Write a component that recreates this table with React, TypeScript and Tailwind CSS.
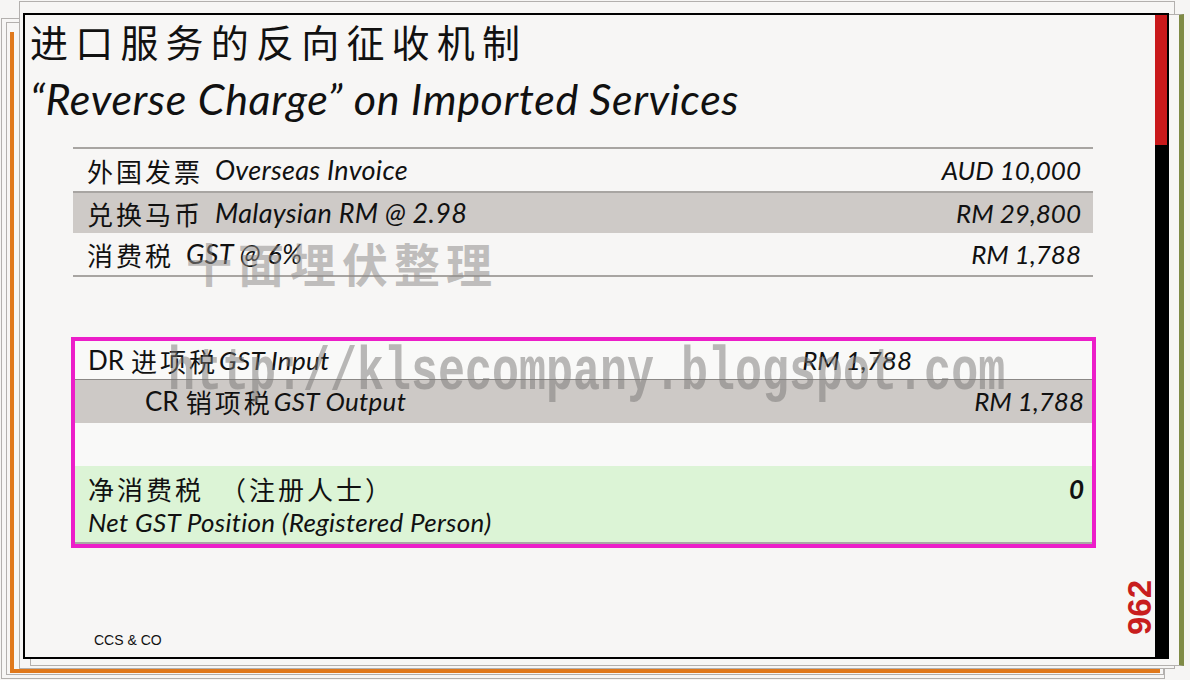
import React from 'react';

const zh = '"Noto Sans CJK SC", sans-serif';
const latin = 'Lato, "Noto Sans CJK SC", sans-serif';

function Zh({ children, className = '' }: { children: React.ReactNode; className?: string }) {
  return (
    <span className={`tracking-[3px] ${className}`} style={{ fontFamily: zh }}>
      {children}
    </span>
  );
}

const rows = [
  { zh: '外国发票', en: 'Overseas Invoice', value: 'AUD 10,000', shaded: false },
  { zh: '兑换马币', en: 'Malaysian RM @ 2.98', value: 'RM 29,800', shaded: true },
  { zh: '消费税', en: 'GST @ 6%', value: 'RM 1,788', shaded: false },
];

export default function App() {
  return (
    <div className="relative w-[1190px] h-[680px] overflow-hidden bg-[#f6f5f4]" style={{ fontFamily: latin }}>
      {/* stacked sheets behind the slide */}
      <div className="absolute left-[1px] top-[18px] w-[1164px] h-[661px] border border-[#b3b0ae] bg-[#f7f6f5]" />
      <div className="absolute left-[6px] top-[22px] w-[1158px] h-[653px] border border-[#b3b0ae] bg-[#f7f6f5]" />
      <div className="absolute left-[10px] top-[32px] w-[1150px] h-[641px] border-l-4 border-b-4 border-[#e0791d]" />
      <div className="absolute left-[19px] top-[1px] w-[1156px] h-[668px] border border-[#b3b0ae] bg-[#f7f6f5]" />
      <div className="absolute left-[30px] top-[14px] w-[1154px] h-[652px] border border-[#b3b0ae] border-r-[5px] border-r-[#7f8b46] bg-[#f7f6f5]" />

      {/* slide */}
      <div className="absolute left-[23px] top-[13px] w-[1146px] h-[646px] border-2 border-black bg-[#f7f6f5] flex">
        <div className="flex-1 flex flex-col text-[#111]">
          <div className="mt-[2px] pl-[5px] h-[48px] text-[38px] leading-[48px] tracking-[7.2px]" style={{ fontFamily: zh }}>
            进口服务的反向征收机制
          </div>
          <div className="pl-[5px] h-[68px] text-[43px] leading-[68px] tracking-[0.65px] italic">
            “Reverse Charge” on Imported Services
          </div>

          <div className="mt-[14px] ml-[48px] w-[1020px] border-t-2 border-b-2 border-[#a8a5a2]">
            {rows.map((r, i) => (
              <div
                key={r.zh}
                className={`h-[42px] flex items-center justify-between pl-[14px] pr-[12px] ${
                  r.shaded ? 'bg-[#cecac7]' : ''
                } ${i === 1 ? 'border-t-2 border-[#a8a5a2]' : ''}`}
              >
                <div className="flex items-center">
                  <Zh className="text-[26px]">{r.zh}</Zh>
                  <span className="italic ml-[12px] text-[27px] tracking-[0.3px]">{r.en}</span>
                </div>
                <span className="italic text-[26px]">{r.value}</span>
              </div>
            ))}
          </div>

          <div className="mt-[60px] ml-[46px] w-[1025px] border-4 border-[#ec1ec9] text-[26px]">
            <div className="h-[39px] flex items-center bg-[#f9f9f8] pl-[13px] pr-[180px] border-b border-[#8b8886]">
              <div className="flex-1 flex items-center">
                <span>DR</span>
                <Zh className="ml-[7px] text-[26px]">进项税</Zh>
                <span className="italic ml-[1px] tracking-[0.3px]">GST Input</span>
              </div>
              <span className="italic">RM 1,788</span>
            </div>
            <div className="h-[43px] flex items-center bg-[#cdc9c6] pl-[70px] pr-[8px]">
              <div className="flex-1 flex items-center">
                <span>CR</span>
                <Zh className="ml-[7px] text-[26px]">销项税</Zh>
                <span className="italic ml-[1px] tracking-[0.3px]">GST Output</span>
              </div>
              <span className="italic">RM 1,788</span>
            </div>
            <div className="h-[43px] bg-[#f9f9f8]" />
            <div className="h-[78px] bg-[#dcf4d6] pl-[13px] pr-[8px] pt-[6px] flex border-b-2 border-[#a9a7a5]">
              <div className="flex-1 flex flex-col">
                <Zh className="text-[26px] leading-[34px]">净消费税　（注册人士）</Zh>
                <span className="italic leading-[32px] tracking-[0.3px]">Net GST Position (Registered Person)</span>
              </div>
              <span className="italic font-bold leading-[34px]">0</span>
            </div>
          </div>

          <div className="mt-auto flex items-end justify-between pl-[69px] pb-[6px]">
            <span className="text-[14px]" style={{ fontFamily: '"Liberation Sans", Arial, sans-serif' }}>
              CCS &amp; CO
            </span>
            <span
              className="mb-[16px] text-[33px] font-bold text-[#c81e1e] leading-[30px] [writing-mode:vertical-rl] rotate-180"
              style={{ fontFamily: '"Liberation Sans", Arial, sans-serif' }}
            >
              962
            </span>
          </div>
        </div>
        <div className="w-[12px] flex flex-col">
          <div className="h-[130px] bg-[#c9191b]" />
          <div className="flex-1 bg-black" />
        </div>
      </div>

      {/* watermarks */}
      <div
        className="absolute left-[186px] top-[236px] text-[46px] leading-[52px] tracking-[6px] font-bold text-[#8f8c8a]/55 pointer-events-none"
        style={{ fontFamily: zh }}
      >
        十面埋伏整理
      </div>
      <div
        className="absolute left-[168px] top-[340px] text-[45px] leading-[50px] scale-y-[1.35] origin-top font-bold text-[#787573]/50 pointer-events-none"
        style={{ fontFamily: '"Liberation Mono", monospace' }}
      >
        http://klsecompany.blogspot.com
      </div>
    </div>
  );
}
